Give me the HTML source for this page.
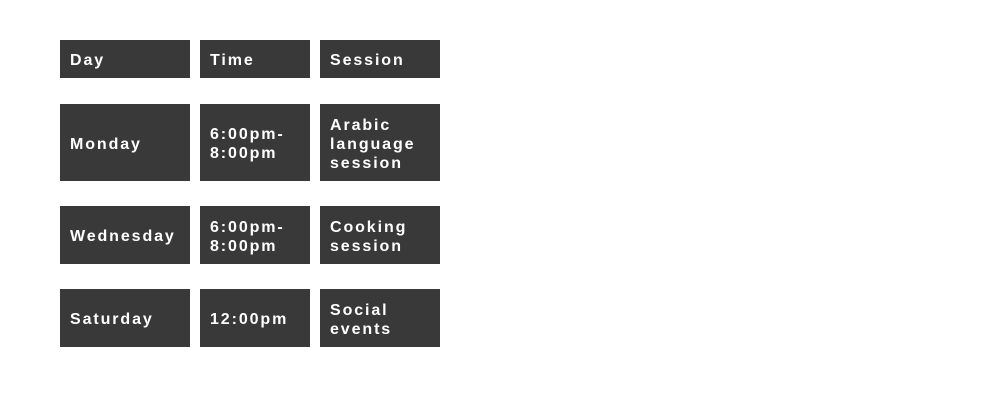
<!DOCTYPE html><html><head><style>
body{margin:0;background:#fff;width:1000px;height:406px;position:relative;overflow:hidden}
.c{position:absolute;background:#3a3939;color:#fff;font:bold 16px/19px "Liberation Sans",sans-serif;letter-spacing:1.9px;display:flex;align-items:center;padding-left:10px;padding-top:3px;box-sizing:border-box}
</style></head><body>
<div class="c" style="left:60px;top:40px;width:130px;height:38px">Day</div>
<div class="c" style="left:200px;top:40px;width:110px;height:38px">Time</div>
<div class="c" style="left:320px;top:40px;width:120px;height:38px">Session</div>
<div class="c" style="left:60px;top:104px;width:130px;height:77px">Monday</div>
<div class="c" style="left:200px;top:104px;width:110px;height:77px">6:00pm-<br>8:00pm</div>
<div class="c" style="left:320px;top:104px;width:120px;height:77px">Arabic<br>language<br>session</div>
<div class="c" style="left:60px;top:206px;width:130px;height:58px">Wednesday</div>
<div class="c" style="left:200px;top:206px;width:110px;height:58px">6:00pm-<br>8:00pm</div>
<div class="c" style="left:320px;top:206px;width:120px;height:58px">Cooking<br>session</div>
<div class="c" style="left:60px;top:289px;width:130px;height:58px">Saturday</div>
<div class="c" style="left:200px;top:289px;width:110px;height:58px">12:00pm</div>
<div class="c" style="left:320px;top:289px;width:120px;height:58px">Social<br>events</div>
</body></html>
